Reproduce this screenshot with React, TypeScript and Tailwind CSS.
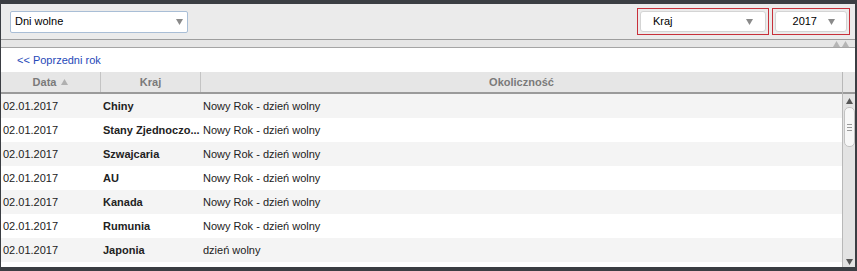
import React from 'react';

const rows = [
  { date: '02.01.2017', country: 'Chiny', note: 'Nowy Rok - dzień wolny' },
  { date: '02.01.2017', country: 'Stany Zjednoczo...', note: 'Nowy Rok - dzień wolny' },
  { date: '02.01.2017', country: 'Szwajcaria', note: 'Nowy Rok - dzień wolny' },
  { date: '02.01.2017', country: 'AU', note: 'Nowy Rok - dzień wolny' },
  { date: '02.01.2017', country: 'Kanada', note: 'Nowy Rok - dzień wolny' },
  { date: '02.01.2017', country: 'Rumunia', note: 'Nowy Rok - dzień wolny' },
  { date: '02.01.2017', country: 'Japonia', note: 'dzień wolny' }
];

const Arrow: React.FC<{ up?: boolean; className?: string }> = ({ up, className }) => (
  <svg width="7" height="6" viewBox="0 0 7 6" className={className}>
    <path d={up ? 'M0 6 L3.5 0 L7 6 Z' : 'M0 0 L7 0 L3.5 6 Z'} fill="currentColor" />
  </svg>
);

export default function App() {
  return (
    <div
      className="w-[857px] h-[271px] bg-[#3b3e43] pt-[4px] pl-[1px] pr-[2px] pb-[4px] overflow-hidden text-[11px] text-[#222]"
      style={{ fontFamily: '"Liberation Sans", Arial, sans-serif' }}
    >
      <div className="h-full flex flex-col bg-white overflow-hidden">
        {/* toolbar */}
        <div className="h-[36px] shrink-0 bg-[#ebebeb] flex items-center pl-[9px] pr-[5px] border-b border-[#9d9d9d]">
          <div className="w-[178px] h-[22px] bg-white border border-[#a9bed6] rounded-[2px] flex items-center justify-between pl-[4px] pr-[4px] text-black">
            <span>Dni wolne</span>
            <Arrow className="text-[#8a8a8a]" />
          </div>
          <div className="flex-1" />
          <div className="w-[132px] h-[27px] border border-[#c8303a] p-[2px]">
            <div className="h-full bg-white rounded-[3px] border border-[#d4d4d4] flex items-center justify-between pl-[12px] pr-[12px] text-black">
              <span>Kraj</span>
              <Arrow className="text-[#8a8a8a]" />
            </div>
          </div>
          <div className="w-[78px] h-[27px] ml-[3px] border border-[#c8303a] p-[2px]">
            <div className="h-full bg-white rounded-[3px] border border-[#d4d4d4] flex items-center justify-end gap-[11px] pr-[11px] text-black">
              <span>2017</span>
              <Arrow className="text-[#8a8a8a]" />
            </div>
          </div>
        </div>
        {/* collapse strip */}
        <div className="h-[8px] shrink-0 bg-[#e6e6e6] border-b border-[#a5a5a5] flex items-center justify-end gap-[2px] pr-[6px]">
          <Arrow up className="text-[#b5b5b5]" />
          <Arrow up className="text-[#b5b5b5]" />
        </div>
        {/* content */}
        <div className="flex-1 flex flex-col min-h-0">
          <div className="h-[24px] shrink-0 flex items-center pl-[16px] text-[#2649b8]">&lt;&lt; Poprzedni rok</div>
          <div className="flex flex-1 min-h-0">
            <div className="flex-1 flex flex-col min-w-0">
              <div className="h-[22px] shrink-0 flex bg-[#e6e6e6] border-b-2 border-[#9a9a9a] font-bold text-[#7a7a7a]">
                <div className="w-[100px] flex items-center justify-center gap-[5px] border-r border-[#c4c4c4]">
                  <span>Data</span>
                  <Arrow up className="text-[#b0b0b0]" />
                </div>
                <div className="w-[100px] flex items-center justify-center border-r border-[#c4c4c4]">Kraj</div>
                <div className="flex-1 flex items-center justify-center">Okoliczność</div>
              </div>
              {rows.map((r, i) => (
                <div key={i} className={`h-[24px] shrink-0 flex items-center ${i % 2 === 0 ? 'bg-[#f4f4f4]' : 'bg-white'}`}>
                  <div className="w-[100px] pl-[2px]">{r.date}</div>
                  <div className="w-[100px] pl-[2px] font-bold whitespace-nowrap">{r.country}</div>
                  <div className="flex-1 pl-[2px]">{r.note}</div>
                </div>
              ))}
            </div>
            {/* scrollbar */}
            <div className="w-[13px] shrink-0 flex flex-col border-l border-[#b8b8b8]">
              <div className="h-[22px] shrink-0 bg-[#e6e6e6] border-b-2 border-[#9a9a9a]" />
              <div className="flex-1 bg-[#e3e3e3] flex flex-col items-center pt-[4px] pb-[2px]">
                <Arrow up className="text-[#555]" />
                <div className="mt-[3px] w-[11px] h-[40px] bg-[#f7f7f7] border border-[#c2c2c2] rounded-[5px] flex flex-col items-center justify-center gap-[2px]">
                  <div className="w-[5px] h-px bg-[#9a9a9a]" />
                  <div className="w-[5px] h-px bg-[#9a9a9a]" />
                  <div className="w-[5px] h-px bg-[#9a9a9a]" />
                </div>
                <div className="flex-1" />
                <Arrow className="text-[#555]" />
              </div>
            </div>
          </div>
        </div>
      </div>
    </div>
  );
}
